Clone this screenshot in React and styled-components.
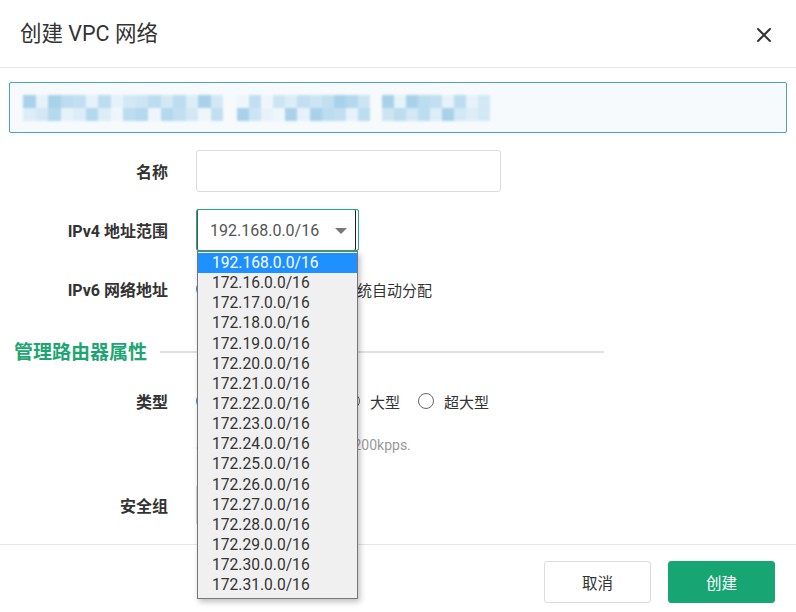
import React from 'react';
import styled, { createGlobalStyle } from 'styled-components';

const GlobalStyle = createGlobalStyle`
  html, body {
    margin: 0;
    padding: 0;
    background: #fff;
  }
  body {
    font-family: Roboto, "Noto Sans CJK SC", "Noto Sans", sans-serif;
    color: #333;
  }
  * {
    box-sizing: border-box;
  }
`;

const ipOptions = [
  '192.168.0.0/16',
  ...Array.from({ length: 16 }, (_, i) => `172.${16 + i}.0.0/16`),
];

// pixelated placeholder for the blurred notice text
const shades = ['#d3e8f5', '#bcdcef', '#e6f2f9', '#a9d2ea', '#cde5f3', '#c2dff1', '#eef6fb', '#b4d8ed', '#dcedf7'];
const makeCells = (count, seed) =>
  Array.from({ length: count * 2 }, (_, i) => shades[(i * 7 + seed * 3 + ((i * i) % 5)) % shades.length]);

const blurSegments = [
  { width: 200, cols: 16, cells: makeCells(16, 1) },
  { width: 133, cols: 11, cells: makeCells(11, 2) },
  { width: 108, cols: 9, cells: makeCells(9, 4) },
];

const App = () => {
  return (
    <>
      <GlobalStyle />
      <Modal>
        <Header>
          <Title>创建 VPC 网络</Title>
          <CloseButton aria-label="close">
            <svg width="16" height="16" viewBox="0 0 16 16">
              <path d="M2 2 L14 14 M14 2 L2 14" stroke="#333" strokeWidth="2" strokeLinecap="round" />
            </svg>
          </CloseButton>
        </Header>

        <Body>
          <Notice>
            {blurSegments.map((seg, i) => (
              <BlurText key={i} $cols={seg.cols} style={{ width: seg.width }}>
                {seg.cells.map((c, j) => (
                  <BlurCell key={j} $color={c} />
                ))}
              </BlurText>
            ))}
          </Notice>

          <Form>
            <Row>
              <Label>名称</Label>
              <TextInput />
            </Row>

            <Row>
              <Label>IPv4 地址范围</Label>
              <SelectWrap>
                <Select $focused>
                  <span>192.168.0.0/16</span>
                  <Caret />
                </Select>
                <Dropdown>
                  {ipOptions.map((opt, i) => (
                    <Option key={opt} $active={i === 0}>{opt}</Option>
                  ))}
                </Dropdown>
              </SelectWrap>
            </Row>

            <Row>
              <Label>IPv6 网络地址</Label>
              <RadioGroup $gap={16}>
                <RadioItem>
                  <Radio $checked />
                  关闭 IPv6
                </RadioItem>
                <RadioItem>
                  <Radio />
                  由系统自动分配
                </RadioItem>
              </RadioGroup>
            </Row>
          </Form>

          <SectionTitle>
            <span>管理路由器属性</span>
            <SectionLine />
          </SectionTitle>

          <Form>
            <Row $top={16}>
              <Label>类型</Label>
              <RadioGroup $gap={18}>
                <RadioItem>
                  <Radio $checked />
                  小型
                </RadioItem>
                <RadioItem>
                  <Radio />
                  中型
                </RadioItem>
                <RadioItem>
                  <Radio />
                  大型
                </RadioItem>
                <RadioItem>
                  <Radio />
                  超大型
                </RadioItem>
              </RadioGroup>
            </Row>
            <HintRow>
              <Hint>小型路由器最大转发能力 200kpps.</Hint>
            </HintRow>
            <Row $top={30}>
              <Label>安全组</Label>
              <Select $narrow>
                <span>默认</span>
                <Caret />
              </Select>
            </Row>
          </Form>
        </Body>

        <Footer>
          <Button>取消</Button>
          <Button $primary>创建</Button>
        </Footer>
      </Modal>
    </>
  );
};

const Modal = styled.div`
  width: 796px;
  height: 612px;
  display: flex;
  flex-direction: column;
  background: #fff;
`;

const Header = styled.div`
  height: 68px;
  flex-shrink: 0;
  display: flex;
  align-items: center;
  justify-content: space-between;
  padding: 0 24px 0 20px;
  border-bottom: 1px solid #e6e6e6;
`;

const Title = styled.h2`
  margin: 0 0 4px;
  font-size: 21.5px;
  font-weight: 400;
  color: #333;
`;

const CloseButton = styled.button`
  border: none;
  background: none;
  padding: 0;
  margin-top: 2px;
  width: 16px;
  height: 16px;
  display: flex;
  cursor: pointer;
`;

const Body = styled.div`
  flex: 1;
  position: relative;
  padding: 14px 9px 0;
`;

const Notice = styled.div`
  height: 51px;
  border: 1px solid #4f9ecb;
  border-radius: 2px;
  background: #f6fafd;
  display: flex;
  align-items: center;
  gap: 0;
  padding: 0 0 0 13px;

  & > div + div {
    margin-left: 14px;
  }
  & > div:nth-child(3) {
    margin-left: 12px;
  }
`;

const BlurText = styled.div`
  height: 26px;
  display: grid;
  grid-template-columns: repeat(${({ $cols }) => $cols}, 1fr);
  grid-template-rows: 13px 13px;
  filter: blur(0.8px);
`;

const BlurCell = styled.span`
  background: ${({ $color }) => $color};
`;

const Form = styled.div`
  display: flex;
  flex-direction: column;
`;

const Row = styled.div`
  display: flex;
  align-items: center;
  min-height: 42px;
  margin-top: ${({ $top }) => ($top != null ? $top : 17)}px;
`;

const Label = styled.label`
  width: 159px;
  flex-shrink: 0;
  margin-right: 28px;
  text-align: right;
  font-size: 16px;
  font-weight: 700;
  color: #333;
`;

const TextInput = styled.input`
  width: 305px;
  height: 42px;
  border: 1px solid #dcdcdc;
  border-radius: 3px;
  outline: none;
  font-size: 15px;
  padding: 0 12px;
`;

const SelectWrap = styled.div`
  position: relative;
  z-index: 5;
`;

const Select = styled.div`
  width: ${({ $narrow }) => ($narrow ? '150px' : '163px')};
  height: ${({ $narrow }) => ($narrow ? '40px' : '42px')};
  border: 1px solid ${({ $focused }) => ($focused ? '#25a77a' : '#dcdcdc')};
  border-radius: 2px;
  display: flex;
  align-items: center;
  justify-content: space-between;
  padding: 0 11px 0 13px;
  font-size: 16px;
  color: #555;
  box-shadow: ${({ $focused }) =>
    $focused ? 'inset 1px 0 0 #555, inset -2px 0 0 #fff, inset -3px 0 0 #222' : 'none'};
`;

const Caret = styled.span`
  width: 0;
  height: 0;
  border-left: 6px solid transparent;
  border-right: 6px solid transparent;
  border-top: 6px solid #777;
  margin-top: 1px;
`;

const Dropdown = styled.ul`
  position: absolute;
  top: 42px;
  left: 1px;
  width: 161px;
  margin: 0;
  padding: 1px 0 3px;
  list-style: none;
  background: #f0f0f0;
  border: 1px solid #777;
  box-shadow: 2px 3px 6px rgba(0, 0, 0, 0.25);
`;

const Option = styled.li`
  height: 20.15px;
  line-height: 20px;
  padding-left: 14px;
  font-size: 15.6px;
  color: ${({ $active }) => ($active ? '#fff' : '#333')};
  background: ${({ $active }) => ($active ? '#1e90ff' : 'transparent')};
`;

const RadioGroup = styled.div`
  display: flex;
  align-items: center;
  gap: ${({ $gap }) => $gap}px;
`;

const RadioItem = styled.label`
  display: flex;
  align-items: center;
  gap: 10px;
  font-size: 15px;
  color: #333;
`;

const Radio = styled.span`
  width: 16px;
  height: 16px;
  border-radius: 50%;
  border: ${({ $checked }) => ($checked ? '5px solid #2d8cf0' : '1px solid #666')};
  background: #fff;
  flex-shrink: 0;
`;

const SectionTitle = styled.div`
  display: flex;
  align-items: center;
  gap: 13px;
  margin: 27px 0 0 5px;
  font-size: 19px;
  font-weight: 700;
  color: #1ea672;
`;

const SectionLine = styled.span`
  width: 444px;
  height: 2px;
  background: #e2e2e2;
  margin-top: 2px;
`;

const HintRow = styled.div`
  padding-left: 187px;
  margin-top: 12px;
`;

const Hint = styled.span`
  font-size: 14px;
  color: #999;
`;

const Footer = styled.div`
  height: 68px;
  flex-shrink: 0;
  display: flex;
  align-items: center;
  justify-content: flex-end;
  gap: 17px;
  padding: 0 21px 0 0;
  border-top: 1px solid #e6e6e6;
`;

const Button = styled.button`
  width: 107px;
  height: 42px;
  margin-top: 6px;
  border-radius: 3px;
  font-family: Roboto, "Noto Sans CJK SC", sans-serif;
  font-size: 15.5px;
  cursor: pointer;
  border: 1px solid ${({ $primary }) => ($primary ? '#17a673' : '#dcdcdc')};
  background: ${({ $primary }) => ($primary ? '#17a673' : '#fff')};
  color: ${({ $primary }) => ($primary ? '#fff' : '#333')};
`;

export default App;
